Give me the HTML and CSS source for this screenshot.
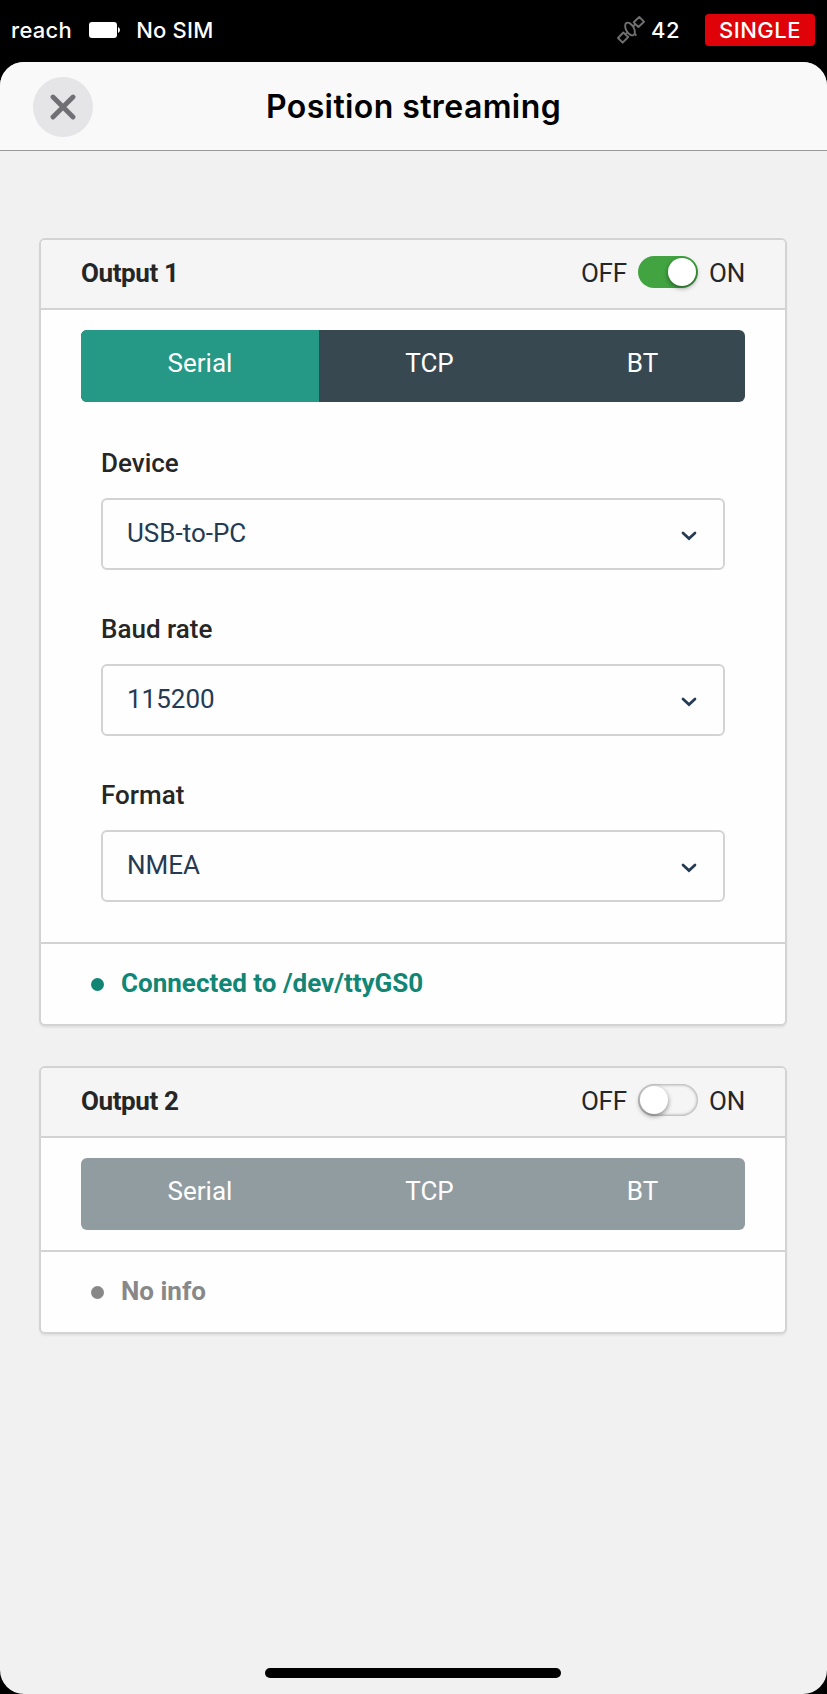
FILE: index.html
```html
<!DOCTYPE html>
<html lang="en">
<head>
<meta charset="utf-8">
<title>Position streaming</title>
<link rel="stylesheet" href="styles.css">
</head>
<body>
<div class="statusbar">
  <span class="device-name">reach</span>
  <svg class="battery" width="31" height="16" viewBox="0 0 31 16"><rect width="28" height="16" rx="3" fill="#fff"/><path d="M29 5q2 1 2 3t-2 3z" fill="#fff"/></svg>
  <span class="sim">No SIM</span>
  <svg class="satellite" width="28" height="28" viewBox="0 0 28 28" fill="none" stroke="#707070" stroke-width="1.9" stroke-linejoin="round"><path d="M22.300 1L27 5.700 21.400 11 16.700 6.300zM6.300 16.500L11.200 21 5.700 26.700 1 22zM18.500 8l-2 2M8.300 18.700l2-2"/><ellipse cx="13" cy="13" rx="3.900" ry="7" transform="rotate(-30 13 13)"/><path d="M17.500 17.500l1.800 2.200"/></svg>
  <span class="sat-count">42</span>
  <span class="badge">SINGLE</span>
</div>
<main class="sheet">
  <header class="titlebar">
    <button class="close" aria-label="Close"><svg width="26" height="26" viewBox="0 0 26 26"><path d="M3 3l20 20M23 3L3 23" stroke="#706f74" stroke-width="4.800" stroke-linecap="round"/></svg></button>
    <h1 class="title">Position streaming</h1>
  </header>
  <div class="content">
    <section class="card">
      <div class="card-head"><h2 class="card-title">Output 1</h2><span class="off">OFF</span><span class="toggle toggle-on"><span class="knob"></span></span><span class="on">ON</span></div>
      <div class="tabs"><span class="tab tab-active">Serial</span><span class="tab">TCP</span><span class="tab">BT</span></div>
      <div class="fields">
        <div class="field"><div class="label">Device</div><div class="select"><span class="value">USB-to-PC</span><svg class="chevron" width="16" height="10" viewBox="0 0 16 10"><path d="M2 2l6 5.600L14 2" fill="none" stroke="#253a53" stroke-width="2.700" stroke-linecap="round"/></svg></div></div>
        <div class="field"><div class="label">Baud rate</div><div class="select"><span class="value">115200</span><svg class="chevron" width="16" height="10" viewBox="0 0 16 10"><path d="M2 2l6 5.600L14 2" fill="none" stroke="#253a53" stroke-width="2.700" stroke-linecap="round"/></svg></div></div>
        <div class="field"><div class="label">Format</div><div class="select"><span class="value">NMEA</span><svg class="chevron" width="16" height="10" viewBox="0 0 16 10"><path d="M2 2l6 5.600L14 2" fill="none" stroke="#253a53" stroke-width="2.700" stroke-linecap="round"/></svg></div></div>
      </div>
      <div class="card-foot connected"><span class="dot"></span><span class="status">Connected to /dev/ttyGS0</span></div>
    </section>
    <section class="card">
      <div class="card-head"><h2 class="card-title">Output 2</h2><span class="off">OFF</span><span class="toggle"><span class="knob"></span></span><span class="on">ON</span></div>
      <div class="tabs tabs-disabled"><span class="tab">Serial</span><span class="tab">TCP</span><span class="tab">BT</span></div>
      <div class="card-foot"><span class="dot"></span><span class="status">No info</span></div>
    </section>
  </div>
  <div class="home-indicator"></div>
</main>
</body>
</html>
```
FILE: styles.css
```css
* { box-sizing: border-box; }
body {
  margin: 0;
  height: 1694px;
  display: flex;
  flex-direction: column;
  background: #000;
  color: #262626;
  font: 26px/32px Roboto, sans-serif;
}
.statusbar {
  height: 62px;
  padding: 0 12px 2px 11px;
  display: flex;
  align-items: center;
  color: #fff;
  font: 500 22px/32px Inter, sans-serif;
  letter-spacing: 0.3px;
}
.battery { margin-left: 17px; }
.sim { margin-left: 16px; letter-spacing: 0.2px; }
.satellite { margin-left: auto; }
.sat-count { margin-left: 6px; letter-spacing: 0.5px; }
.badge {
  width: 110px;
  height: 32px;
  margin-left: 25px;
  border-radius: 4px;
  background: #df0209;
  text-align: center;
  letter-spacing: 0.5px;
}
.sheet {
  flex: 1;
  display: flex;
  flex-direction: column;
  overflow: hidden;
  border-radius: 24px;
  background: #f1f1f1;
}
.titlebar {
  height: 89px;
  padding: 1px 33px 0;
  display: grid;
  grid-template-columns: 60px 1fr 60px;
  align-items: center;
  border-bottom: 1px solid #999;
  background: #f9f9f9;
}
.close {
  width: 60px;
  height: 60px;
  padding: 0;
  display: grid;
  place-items: center;
  border: 0;
  border-radius: 50%;
  background: #e5e5e7;
}
.title {
  margin: 0;
  color: #000;
  text-align: center;
  font: 600 32px/40px Inter, sans-serif;
  letter-spacing: 0.4px;
}
.content {
  flex: 1;
  padding: 87px 40px 0 39px;
  display: flex;
  flex-direction: column;
  gap: 40px;
}
.card {
  border: 2px solid #d3d3d3;
  border-radius: 6px;
  background: #fefefe;
  box-shadow: 0 2px 2px rgba(0, 0, 0, 0.06);
}
.card-head {
  height: 70px;
  padding: 0 40px 2px;
  display: flex;
  align-items: center;
  border-bottom: 2px solid #d3d3d3;
  border-radius: 4px 4px 0 0;
  background: #f5f5f5;
}
.card-title {
  margin: 0 auto 0 0;
  font-size: 26px;
  font-weight: 700;
  letter-spacing: -0.4px;
}
.off,
.on { letter-spacing: -0.2px; }
.toggle {
  width: 60px;
  height: 32px;
  margin: 0 11px 2px;
  padding: 2px;
  display: flex;
  border-radius: 16px;
  background: #f5f5f5;
  box-shadow: inset 0 0 3px 1px #aaa;
}
.toggle-on { justify-content: flex-end; background: #41a441; box-shadow: none; }
.knob {
  width: 28px;
  height: 28px;
  border-radius: 50%;
  background: #fff;
  box-shadow: 0 2px 5px rgba(0, 0, 0, 0.45);
}
.tabs {
  height: 72px;
  margin: 20px 40px;
  display: grid;
  grid-template-columns: 238fr 221fr 205fr;
  overflow: hidden;
  border-radius: 6px;
  background: #374851;
  color: #fff;
}
.tabs-disabled { background: #919ca1; }
.tab { padding-top: 17px; text-align: center; }
.tab-active { background: #259886; }
.fields { padding: 23px 60px 40px; display: grid; gap: 41px; }
.label { height: 53px; padding-top: 2px; font-weight: 500; }
.select {
  height: 72px;
  padding: 2px 26px 2px 24px;
  display: flex;
  align-items: center;
  justify-content: space-between;
  border: 2px solid #d3d3d3;
  border-radius: 6px;
  color: #253a53;
}
.value { padding-bottom: 2px; }
.chevron { margin-top: 4px; }
.card-foot {
  height: 82px;
  padding: 0 50px;
  display: flex;
  align-items: center;
  gap: 17px;
  border-top: 2px solid #d3d3d3;
  color: #888;
  font-weight: 700;
}
.connected { color: #118675; }
.dot { width: 13px; height: 13px; border-radius: 50%; background: currentColor; }
.status { padding-bottom: 2px; }
.home-indicator {
  width: 296px;
  height: 10px;
  margin: 0 0 16px 265px;
  border-radius: 5px;
  background: #000;
}
```
